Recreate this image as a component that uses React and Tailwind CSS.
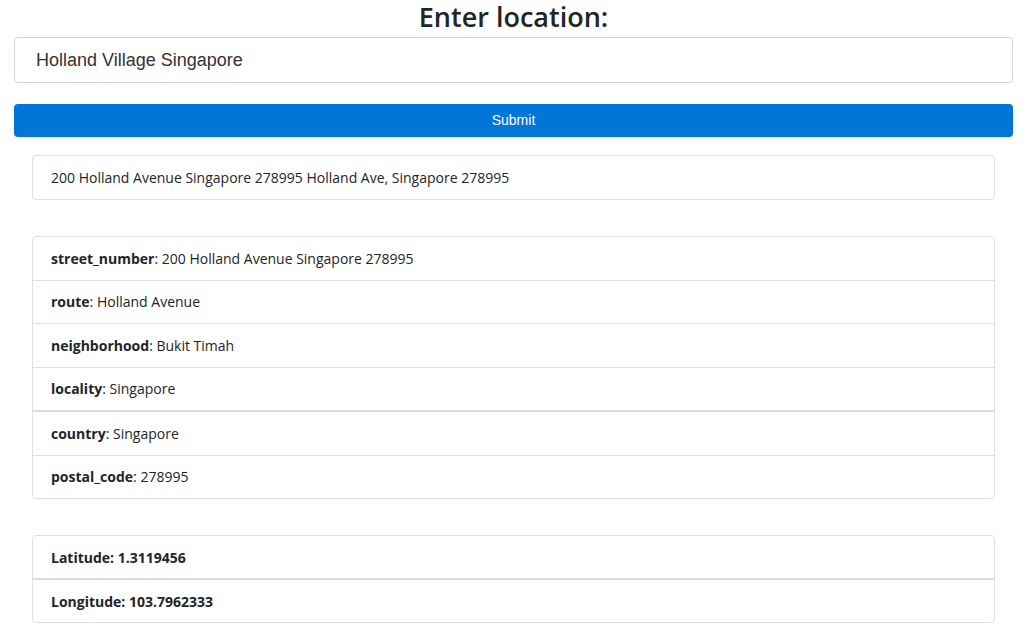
const components = [
  ["street_number", "200 Holland Avenue Singapore 278995"],
  ["route", "Holland Avenue"],
  ["neighborhood", "Bukit Timah"],
  ["locality", "Singapore"],
  ["country", "Singapore"],
  ["postal_code", "278995"],
];

const App = () => {
  return (
    <div className="min-h-screen bg-white pl-[14px] pr-[20px] font-['Open_Sans',sans-serif] text-[#212529]">
      <h2 className="text-center text-[27px] font-semibold leading-[34px]">Enter location:</h2>

      <input
        type="text"
        defaultValue="Holland Village Singapore"
        className="mt-[3px] block h-[46px] w-full rounded border border-[#d6d6d6] px-[21px] font-['Liberation_Sans',sans-serif] text-[18px] text-[#333] outline-none"
      />

      <button className="mt-[21px] block h-[33px] w-full rounded bg-[#0275d8] font-['Liberation_Sans',sans-serif] text-[14px] text-white">
        Submit
      </button>

      <div className="ml-[18px] mr-[18px] mt-[18px] rounded border border-[#dfdfdf] px-[18px] py-[11px] text-[14px] leading-[21px]">
        200 Holland Avenue Singapore 278995 Holland Ave, Singapore 278995
      </div>

      <ul className="ml-[18px] mr-[18px] mt-[36px] rounded border border-[#dfdfdf] text-[14px] leading-[21px]">
        {components.map(([key, value], i) => (
          <li
            key={key}
            className={`px-[18px] py-[10.75px] ${i === 0 ? "" : i === 4 ? "border-t-2 border-[#dcdcdc]" : "border-t border-[#dfdfdf]"}`}
          >
            <b className="font-bold">{key}</b>: {value}
          </li>
        ))}
      </ul>

      <ul className="ml-[18px] mr-[18px] mt-[36px] rounded border border-[#dfdfdf] text-[14px] font-bold leading-[21px]">
        <li className="px-[18px] py-[10.5px]">Latitude: 1.3119456</li>
        <li className="border-t-2 border-[#dcdcdc] px-[18px] py-[10.5px]">Longitude: 103.7962333</li>
      </ul>
    </div>
  );
};

export default App;
